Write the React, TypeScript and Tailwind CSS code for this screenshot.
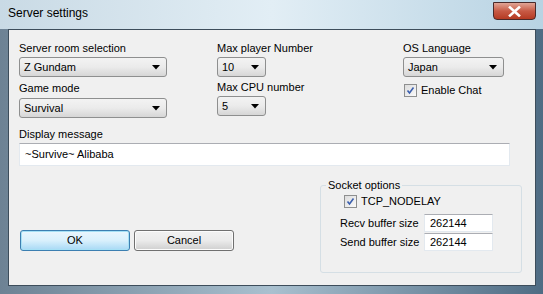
const font = "font-['Liberation_Sans','DejaVu_Sans',sans-serif]";

const Combo = ({ value, width }: { value: string; width: string }) => (
  <div
    className={`${width} h-[20px] flex items-center justify-between pl-[4px] pr-[6px] rounded-[3px] border border-[#8e8f8f] bg-gradient-to-b from-[#f3f3f3] via-[#ebebeb] to-[#d6d6d6] text-[11px] text-black leading-none`}
  >
    <span>{value}</span>
    <svg width="8" height="5" viewBox="0 0 8 5">
      <path d="M0 0 H8 L4 4.5 Z" fill="#000" />
    </svg>
  </div>
);

const Check = ({ label }: { label: string }) => (
  <div className="flex items-center gap-[4px]">
    <div className="w-[13px] h-[13px] border border-[#8e8f8f] bg-gradient-to-br from-[#dcdcdc] to-[#fafafa] flex items-center justify-center">
      <svg width="9" height="9" viewBox="0 0 9 9">
        <path d="M1.5 4.5 L3.5 7 L7.5 1.5" stroke="#3b5fae" strokeWidth="1.6" fill="none" />
      </svg>
    </div>
    <span className="text-[11px] leading-none whitespace-nowrap">{label}</span>
  </div>
);

const Label = ({ children }: { children: React.ReactNode }) => (
  <div className="h-[14px] text-[11px] leading-[14px] text-black whitespace-nowrap">{children}</div>
);

const Field = ({ value }: { value: string }) => (
  <div className="w-[69px] h-[18px] bg-white border border-[#e3e9ef] border-t-[#abadb3] flex items-center pl-[5px] text-[11px] leading-none">
    {value}
  </div>
);

export default function App() {
  return (
    <div
      className={`${font} w-[543px] h-[294px] flex flex-col bg-gradient-to-r from-[#6d8294] via-[#a9c0cf] to-[#4f6c84] text-black`}
    >
      {/* title bar */}
      <div className="h-[29px] flex items-start justify-between bg-gradient-to-r from-[#c9dae5] via-[#e2eef5] to-[#b8d3e3]">
        <div className="pl-[8px] pt-[7px] text-[12px] leading-none text-black">Server settings</div>
        <div className="mt-[2px] mr-[7px] w-[43px] h-[18px] rounded-b-[4px] border border-[#4a2a2a] bg-gradient-to-b from-[#e0a596] via-[#c75a45] to-[#b53a22] flex items-center justify-center">
          <svg width="13" height="11" viewBox="0 0 13 11">
            <path d="M2 1.5 L11 9.5 M11 1.5 L2 9.5" stroke="#fff" strokeWidth="2.6" strokeLinecap="square" />
          </svg>
        </div>
      </div>

      <div className="flex flex-1">
        <div className="w-[8px]" />
        {/* client area */}
        <div className="flex-1 bg-[#f0f0f0] border border-[#3d4d5b] flex flex-col pt-[11px] pl-[10px] pr-[12px] pb-[12px]">
          <div className="flex">
            <div className="w-[148px] flex flex-col">
              <Label>Server room selection</Label>
              <div className="mt-[2px]">
                <Combo value="Z Gundam" width="w-[148px]" />
              </div>
              <div className="mt-[4px]">
                <Label>Game mode</Label>
              </div>
              <div className="mt-[3px]">
                <Combo value="Survival" width="w-[148px]" />
              </div>
            </div>
            <div className="ml-[50px] w-[120px] flex flex-col">
              <Label>Max player Number</Label>
              <div className="mt-[2px]">
                <Combo value="10" width="w-[49px]" />
              </div>
              <div className="mt-[3px]">
                <Label>Max CPU number</Label>
              </div>
              <div className="mt-[2px]">
                <Combo value="5" width="w-[49px]" />
              </div>
            </div>
            <div className="ml-[66px] flex flex-col">
              <Label>OS Language</Label>
              <div className="mt-[2px]">
                <Combo value="Japan" width="w-[101px]" />
              </div>
              <div className="mt-[7px] ml-[1px]">
                <Check label="Enable Chat" />
              </div>
            </div>
          </div>

          <div className="mt-[9px]">
            <Label>Display message</Label>
          </div>
          <div className="mt-[2px] w-[491px] h-[23px] bg-white border border-[#e3e9ef] border-t-[#abadb3] flex items-center pl-[5px] text-[11px] leading-none">
            ~Survive~ Alibaba
          </div>

          <div className="flex items-end justify-between mt-[12px] flex-1">
            <div className="flex gap-[4px] mb-[22px] ml-[1px]">
              <div className="w-[110px] h-[21px] rounded-[3px] border border-[#3c7fb1] bg-gradient-to-b from-[#eaf6fd] via-[#d9f0fc] to-[#a7d9f5] shadow-[inset_0_0_0_1px_#a6e0f5] flex items-center justify-center text-[11px] leading-none">
                OK
              </div>
              <div className="w-[100px] h-[21px] rounded-[3px] border border-[#707070] bg-gradient-to-b from-[#f2f2f2] via-[#ebebeb] to-[#cfcfcf] shadow-[inset_0_0_0_1px_#fcfcfc] flex items-center justify-center text-[11px] leading-none">
                Cancel
              </div>
            </div>

            <div className="relative w-[202px] h-[88px] border border-[#d5dfe5] rounded-[3px] mr-[1px]">
              <div className="absolute -top-[8px] left-[5px] px-[2px] bg-[#f0f0f0]">
                <Label>Socket options</Label>
              </div>
              <div className="flex flex-col pt-[9px]">
                <div className="ml-[23px]">
                  <Check label="TCP_NODELAY" />
                </div>
                <div className="flex items-center mt-[6px] ml-[19px]">
                  <div className="w-[84px]">
                    <Label>Recv buffer size</Label>
                  </div>
                  <Field value="262144" />
                </div>
                <div className="flex items-center mt-[1px] ml-[19px]">
                  <div className="w-[84px]">
                    <Label>Send buffer size</Label>
                  </div>
                  <Field value="262144" />
                </div>
              </div>
            </div>
          </div>
        </div>
        <div className="w-[7px]" />
      </div>
      <div className="h-[8px]" />
    </div>
  );
}
